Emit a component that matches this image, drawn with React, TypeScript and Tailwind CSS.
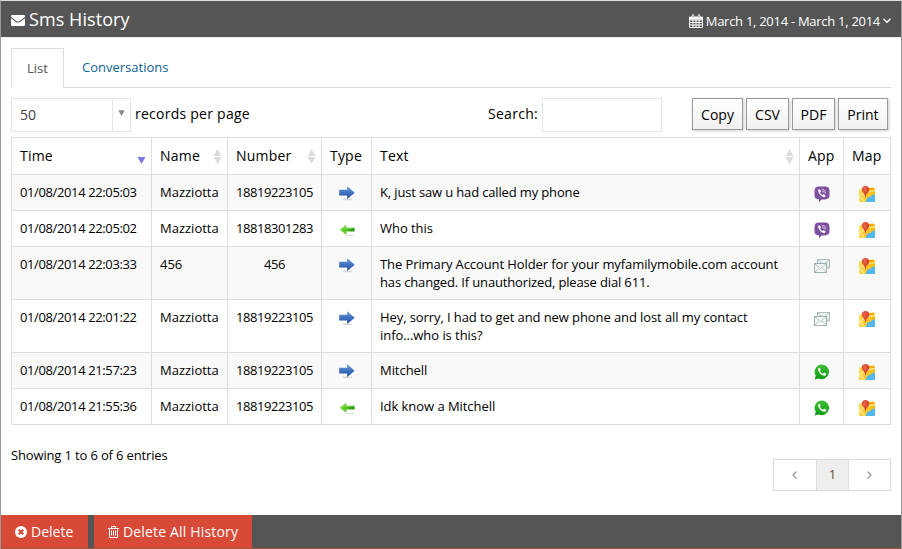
import type { ReactNode } from "react";

type App = "viber" | "sms" | "whatsapp";

interface Message {
  time: string;
  name: string;
  number: string;
  sent: boolean;
  text: string[];
  app: App;
}

const messages: Message[] = [
  { time: "01/08/2014 22:05:03", name: "Mazziotta", number: "18819223105", sent: true, text: ["K, just saw u had called my phone"], app: "viber" },
  { time: "01/08/2014 22:05:02", name: "Mazziotta", number: "18818301283", sent: false, text: ["Who this"], app: "viber" },
  { time: "01/08/2014 22:03:33", name: "456", number: "456", sent: true, text: ["The Primary Account Holder for your myfamilymobile.com account", "has changed. If unauthorized, please dial 611."], app: "sms" },
  { time: "01/08/2014 22:01:22", name: "Mazziotta", number: "18819223105", sent: true, text: ["Hey, sorry, I had to get and new phone and lost all my contact", "info...who is this?"], app: "sms" },
  { time: "01/08/2014 21:57:23", name: "Mazziotta", number: "18819223105", sent: true, text: ["Mitchell"], app: "whatsapp" },
  { time: "01/08/2014 21:55:36", name: "Mazziotta", number: "18819223105", sent: false, text: ["Idk know a Mitchell"], app: "whatsapp" },
];

function Gradients() {
  return (
    <svg width="0" height="0" className="absolute">
      <defs>
        <linearGradient id="blue" x1="0" y1="0" x2="0" y2="1">
          <stop offset="0" stopColor="#6f9bd8" />
          <stop offset="0.5" stopColor="#3f72c0" />
          <stop offset="1" stopColor="#1e4a9c" />
        </linearGradient>
        <linearGradient id="green" x1="0" y1="0" x2="1" y2="0">
          <stop offset="0" stopColor="#7fe048" />
          <stop offset="0.6" stopColor="#43b81c" />
          <stop offset="1" stopColor="#1f8c0c" />
        </linearGradient>
        <linearGradient id="wa" x1="0" y1="0" x2="0" y2="1">
          <stop offset="0" stopColor="#3fbf35" />
          <stop offset="1" stopColor="#0f9a12" />
        </linearGradient>
        <linearGradient id="land" x1="0" y1="0" x2="1" y2="0.3">
          <stop offset="0" stopColor="#ffdf62" />
          <stop offset="1" stopColor="#fbb908" />
        </linearGradient>
        <radialGradient id="pin" cx="0.4" cy="0.3" r="0.7">
          <stop offset="0" stopColor="#ee6a50" />
          <stop offset="1" stopColor="#c52a1c" />
        </radialGradient>
      </defs>
    </svg>
  );
}

function ArrowIcon({ sent }: { sent: boolean }) {
  return sent ? (
    <svg width="16" height="16" viewBox="0 0 16 16">
      <ellipse cx="8.5" cy="14.3" rx="5" ry="1" fill="#000" opacity="0.13" />
      <path d="M0.2 4.800h8V1.300l7.500 6.400-7.500 6.400v-3.600h-8z" fill="url(#blue)" />
    </svg>
  ) : (
    <svg width="16" height="16" viewBox="0 0 16 16">
      <path d="M7 14.500h8" stroke="#2c8a20" strokeWidth="1.200" opacity="0.2" />
      <path d="M15.500 6.800H7.300V3.700L0.600 8.700l6.700 5v-3.200h8.200z" fill="url(#green)" />
      <path d="M2 8.500l4.600-3.300v2.200h8" fill="none" stroke="#a5f07c" strokeWidth="0.700" opacity="0.700" />
    </svg>
  );
}

function AppIcon({ app }: { app: App }) {
  if (app === "viber")
    return (
      <svg width="16" height="16" viewBox="0 0 16 16">
        <path d="M5 .4h6q4.500 0 4.500 4.300v4.400q0 4.300-4.500 4.300H7.800L5 15.900V13.400Q.5 13.400.5 9.100V4.700Q.5.400 5 .4z" fill="#7d51a0" />
        <path d="M5.100 3.300c-1.400.7-1 1.900-.4 3.100 1 2.100 2.500 3.600 4.700 4.600 1 .5 1.700 0 2.200-.9.3-.6-1.400-1.800-2-1.800-.5.100-.6.8-1.100.7C7.300 8.500 6.600 7.700 6.200 6.600c-.1-.5.7-.6.700-1.200 0-.6-1.100-2.400-1.800-2.100z" fill="#fff" />
        <path d="M8.200 3.100q3.400.2 3.500 3.900M8.400 4.900q1.700.1 1.800 2" fill="none" stroke="#fff" strokeWidth="0.700" strokeLinecap="round" opacity="0.850" />
      </svg>
    );
  if (app === "sms")
    return (
      <svg width="16" height="16" viewBox="0 0 16 16">
        <rect x="3.500" y="1.500" width="12" height="8.500" fill="#edf3f3" stroke="#abbcbd" />
        <path d="M4 2l5.500 4.500L15 2M11.500 6l3.500 3.500" fill="none" stroke="#b4c4c5" />
        <rect x="0.500" y="5.500" width="12" height="9" fill="#f3f7f7" stroke="#9fb0b1" />
        <path d="M1 6l5.500 4.500L12 6M1 14l3.700-4M12 14l-3.700-4" fill="none" stroke="#aebebf" strokeWidth="0.900" />
      </svg>
    );
  return (
    <svg width="16" height="16" viewBox="0 0 16 16">
      <path d="M8.100.5a7.300 7.300 0 1 1-3.500 13.900L.6 15.400l1.200-3.700A7.300 7.300 0 0 1 8.100.5z" fill="url(#wa)" />
      <path d="M5.200 3.800c-1.200.4-1.400 1.700-.8 3 1.100 2.600 2.800 4.200 5.500 5 1.300.3 2.200-.5 2.500-1.700.1-.5-1.900-1.500-2.300-1.300-.5.300-.7 1.100-1.200.9C7.500 9.100 6.700 8.200 6.100 7c-.2-.5.6-.8.5-1.400-.1-.5-.7-2-1.400-1.800z" fill="#fff" />
    </svg>
  );
}

function MapIcon() {
  return (
    <svg width="16" height="17" viewBox="0 0 16 17">
      <path d="M0 4.200Q0 3.200 1 3.200l14-.8q1 0 1 1V15q0 1-1 1H1q-1 0-1-1z" fill="url(#land)" />
      <path d="M9 2l6-.4.5 3-8.500.8z" fill="#f6ac06" />
      <path d="M8 5.300l8-.6" stroke="#fff6b0" strokeWidth="1.100" />
      <path d="M16 8.500v6.500q0 1-1 1H6.500l2-4.500 3-.4 1.500-2.100z" fill="#51b7f5" />
      <path d="M0 10.500q4-.5 5-3.500M5.500 16q-.8-3.500-5-4.500" fill="none" stroke="#fff3ac" strokeWidth="1" />
      <path d="M6.500.1A3.600 3.600 0 0 1 10.100 3.700C10.100 6.500 6.900 7 6.700 11.500h-.4C6.100 7 2.900 6.500 2.900 3.700A3.600 3.600 0 0 1 6.500.1z" fill="url(#pin)" />
    </svg>
  );
}

function SortIcon() {
  return (
    <svg width="9" height="15" viewBox="0 0 9 15" className="shrink-0">
      <path d="M4.500 0L8.500 7h-8zM.5 8h8l-4 7z" fill="#dcdcdc" />
    </svg>
  );
}

function Head({ children, icon }: { children: ReactNode; icon?: ReactNode }) {
  return (
    <th className="h-[37px] border-r border-b border-[#ddd] p-0 pl-2 text-left text-[14px] leading-5 font-medium tracking-[0.2px]">
      <div className="flex h-5 items-center justify-between pr-[5px]">
        <span>{children}</span>
        {icon}
      </div>
    </th>
  );
}

const cell = "border-r border-b border-[#ddd] p-0 pt-2 pl-2 align-top leading-[18px]";
const tool = "h-8 border border-[#999] bg-linear-to-b from-white to-[#f1f1f1] text-[14px] shadow-[1px_1px_3px_#ccc]";

function lineTracking(line: string) {
  if (line.length > 60) return "tracking-[-0.09px]";
  if (line.length > 30) return "tracking-[-0.15px]";
  return "tracking-[-0.05px]";
}

export default function App() {
  return (
    <div className="flex h-[549px] w-[902px] flex-col overflow-hidden border-x border-t border-[#999] border-t-[#ddd] bg-white font-['Open_Sans',sans-serif] text-[13px] text-black">
      <Gradients />
      <header className="flex h-9 shrink-0 items-center justify-between bg-[#555] pr-[10px] pl-[10px] text-white">
        <h1 className="-mt-px flex items-center gap-1 text-[18px] leading-6 tracking-[0.07px]">
          <svg width="14" height="11" viewBox="0 0 14 11" className="mt-[3px]">
            <path d="M0 1.200Q0 0 1.200 0h11.600Q14 0 14 1.200 14 2 13 2.800L8.500 6Q7 7 5.500 6L1 2.800Q0 2 0 1.200zM0 3.300l5 3.600q2 1.300 4 0l5-3.600v6.500q0 1.200-1.200 1.200H1.200Q0 11 0 9.800z" fill="#fff" />
          </svg>
          <span>Sms History</span>
        </h1>
        <div className="flex items-center pt-1 text-[13px] leading-5">
          <svg width="14" height="14" viewBox="0 0 14 14" className="mr-[3px]">
            <path d="M.5 3h13v10.500H.5zM.5 6h13M.5 8.500h13M.5 11h13M4 5.500v8M7 5.500v8M10 5.500v8" fill="none" stroke="#fff" />
            <path d="M.5 3h13v2.500H.5z" fill="#fff" />
            <path d="M4 .5v3M10 .5v3" stroke="#fff" strokeWidth="2.200" />
            <path d="M4 1v2.500M10 1v2.500" stroke="#8d568d" strokeWidth="0.800" />
          </svg>
          <span className="tracking-[-0.28px]">March 1, 2014 - March 1, 2014</span>
          <svg width="8" height="6" viewBox="0 0 8 6" className="ml-[3px]">
            <path d="M.5.800L4 4.300 7.500.800" fill="none" stroke="#fff" strokeWidth="1.300" />
          </svg>
        </div>
      </header>

      <main className="flex-1 border-t border-[#eee] px-[10px] pt-[10px]">
        <nav className="flex h-10 items-end border-b border-[#ddd]">
          <button className="-mb-px h-10 w-[53px] border border-b-0 border-[#ddd] bg-white text-[#555]">List</button>
          <button className="h-[39px] px-[18px] pt-px text-[#0d638f]">Conversations</button>
        </nav>

        <div className="flex h-[49px] pt-[10px] text-[14px]">
          <div className="flex h-[34px] w-[120px] border border-[#e5e5e5] text-[#444]">
            <span className="flex-1 pl-2 leading-[31px]">50</span>
            <span className="flex w-[18px] items-center justify-center border-l border-[#e5e5e5]">
              <svg width="7" height="6" viewBox="0 0 7 6" className="-mt-1">
                <path d="M.3.300h6.400L3.500 6z" fill="#888" />
              </svg>
            </span>
          </div>
          <span className="ml-1 leading-8 tracking-[0.25px]">records per page</span>
          <span className="ml-auto leading-8 tracking-[0.28px]">Search:</span>
          <input className="ml-1 h-[34px] w-[120px] border border-[#e5e5e5]" />
          <div className="mr-[3px] ml-[30px] flex gap-[3px]">
            <button className={`${tool} w-[51px]`}>Copy</button>
            <button className={`${tool} w-[43px]`}>CSV</button>
            <button className={`${tool} w-[43px]`}>PDF</button>
            <button className={`${tool} w-[50px]`}>Print</button>
          </div>
        </div>

        <table className="w-[880px] table-fixed border-separate border-spacing-0 border-t border-l border-[#ddd]">
          <colgroup>
            <col className="w-[140px]" />
            <col className="w-[76px]" />
            <col className="w-[94px]" />
            <col className="w-[50px]" />
            <col className="w-[428px]" />
            <col className="w-[44px]" />
            <col className="w-[47px]" />
          </colgroup>
          <thead>
            <tr>
              <Head
                icon={
                  <svg width="9" height="15" viewBox="0 0 9 15" className="shrink-0">
                    <path d="M.5 8h8l-4 7z" fill="#7b7be0" />
                  </svg>
                }
              >
                Time
              </Head>
              <Head icon={<SortIcon />}>Name</Head>
              <Head icon={<SortIcon />}>Number</Head>
              <Head>Type</Head>
              <Head icon={<SortIcon />}>Text</Head>
              <Head>App</Head>
              <Head>Map</Head>
            </tr>
          </thead>
          <tbody>
            {messages.map((m) => (
              <tr key={m.time} className={`odd:bg-[#f9f9f9] ${m.text.length > 1 ? "h-[53px]" : "h-9"}`}>
                <td className={`${cell} tracking-[-0.38px]`}>{m.time}</td>
                <td className={cell}>{m.name}</td>
                <td className={`${cell} pr-2 text-center tracking-[-0.43px]`}>{m.number}</td>
                <td className={cell}>
                  <div className="flex justify-center pt-[2px] pr-2">
                    <ArrowIcon sent={m.sent} />
                  </div>
                </td>
                <td className={cell}>
                  {m.text.map((line) => (
                    <div key={line} className={lineTracking(line)}>{line}</div>
                  ))}
                </td>
                <td className={cell}>
                  <div className="flex justify-center pt-[3px] pr-[7px]">
                    <AppIcon app={m.app} />
                  </div>
                </td>
                <td className={cell}>
                  <div className="flex justify-center pt-[3px] pr-2">
                    <MapIcon />
                  </div>
                </td>
              </tr>
            ))}
          </tbody>
        </table>

        <div className="flex justify-between">
          <p className="pt-5 leading-5 tracking-[-0.15px]">Showing 1 to 6 of 6 entries</p>
          <div className="mt-[34px] flex h-8 w-[118px] border border-[#ddd]">
            <button className="flex w-[42px] items-center justify-center">
              <svg width="5" height="8" viewBox="0 0 5 8" className="mr-px"><path d="M4.500.5L1 4l3.500 3.500" fill="none" stroke="#999" strokeWidth="1.200" /></svg>
            </button>
            <button className="w-[33px] border-x border-[#ddd] bg-[#eee] text-[#6b4a30]">1</button>
            <button className="flex flex-1 items-center justify-center">
              <svg width="5" height="8" viewBox="0 0 5 8"><path d="M.5.500L4 4 .5 7.500" fill="none" stroke="#999" strokeWidth="1.200" /></svg>
            </button>
          </div>
        </div>
      </main>

      <footer className="flex h-[34px] shrink-0 gap-[6px] border-b border-[#a4583a] bg-[#555] text-[14px] text-white">
        <button className="flex w-[87px] items-center bg-[#d84a38] pl-[14px]">
          <svg width="12" height="12" viewBox="0 0 12 12" className="mr-1">
            <circle cx="6" cy="6" r="6" fill="#fff" />
            <path d="M3.700 3.700l4.600 4.600M8.300 3.700L3.700 8.300" stroke="#d84a38" strokeWidth="2" />
          </svg>
          Delete
        </button>
        <button className="flex w-[158px] items-center bg-[#d84a38] pl-[14px] tracking-[0.17px]">
          <svg width="11" height="12" viewBox="0 0 11 12" className="mr-1" fill="none" stroke="#fff">
            <path d="M0 2.500h11M3.500 2.500V.5h4v2M1.500 2.500v9h8v-9M3.500 4.500v5M5.500 4.500v5M7.500 4.500v5" />
          </svg>
          Delete All History
        </button>
      </footer>
    </div>
  );
}
